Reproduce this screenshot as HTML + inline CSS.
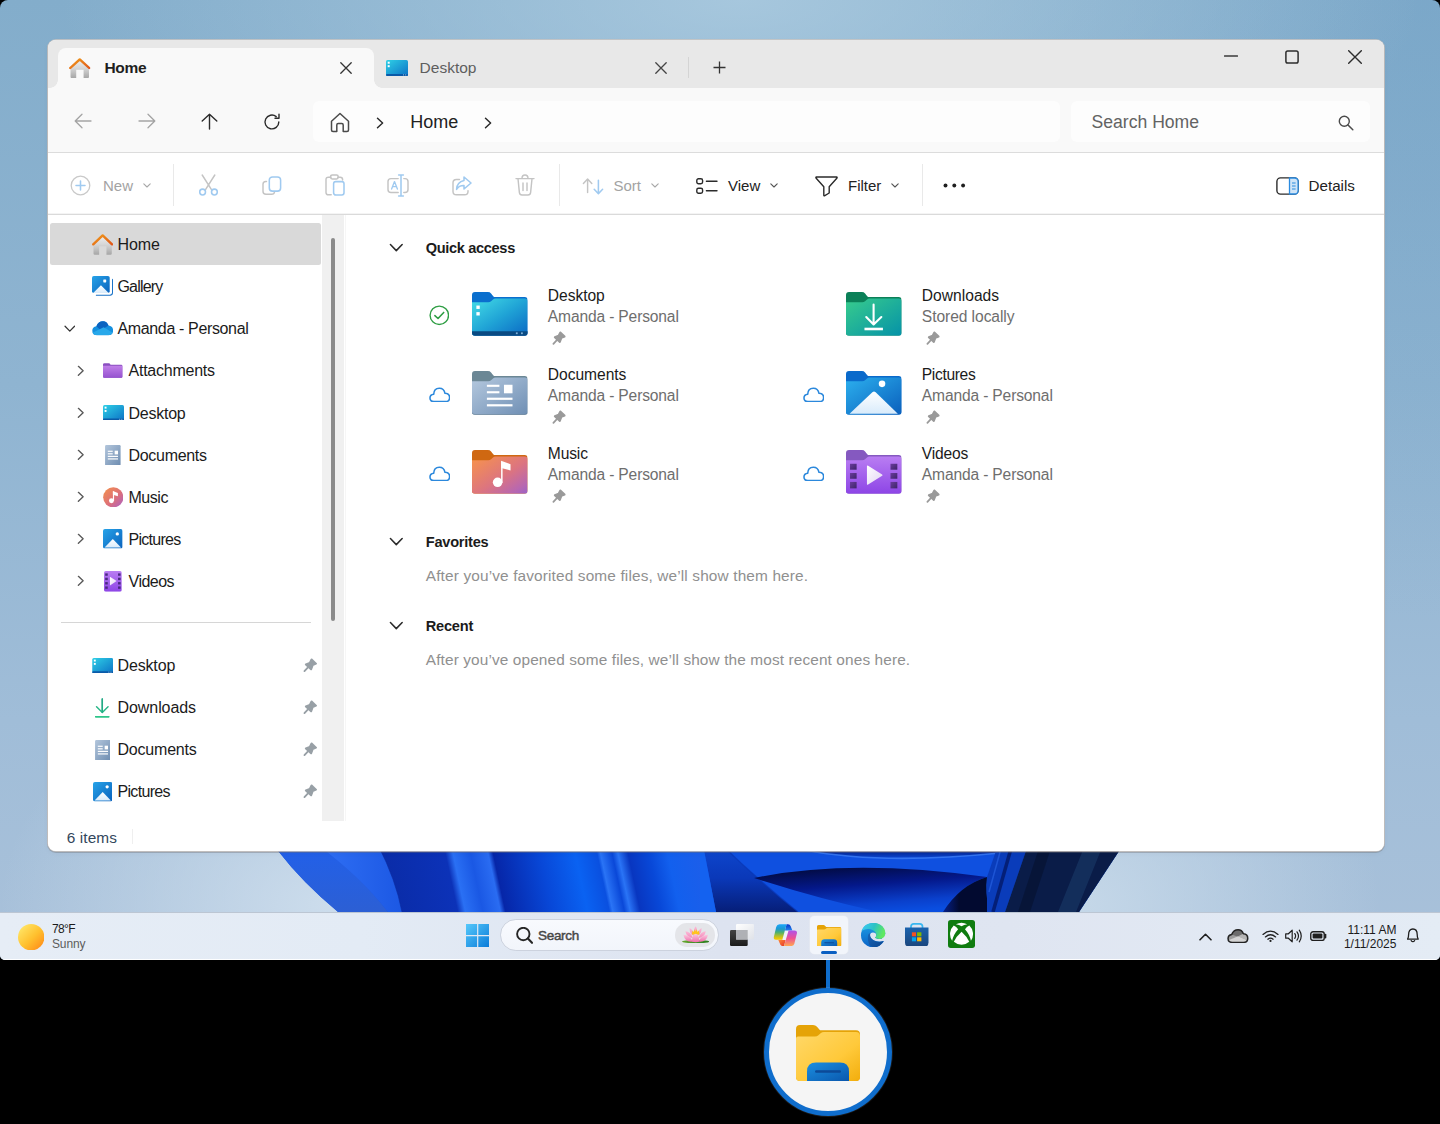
<!DOCTYPE html>
<html><head><meta charset="utf-8">
<style>
*{box-sizing:border-box;margin:0;padding:0}
html,body{width:1440px;height:1124px;background:#000;overflow:hidden}
body{font-family:"Liberation Sans",sans-serif;position:relative;color:#1b1b1b}
.abs{position:absolute}
#screen{position:absolute;left:0;top:0;width:1440px;height:960px;border-radius:8px 8px 5px 5px;overflow:hidden;
 background:
 radial-gradient(ellipse 680px 250px at 740px 0px,rgba(176,206,226,.78),rgba(176,206,226,0) 100%),
 radial-gradient(ellipse 330px 230px at 330px 905px,rgba(206,222,237,.95),rgba(206,222,237,0) 100%),
 radial-gradient(ellipse 300px 230px at 1080px 905px,rgba(200,218,234,.9),rgba(200,218,234,0) 100%),
 radial-gradient(ellipse 520px 620px at 1440px 0px,rgba(112,160,198,.42),rgba(112,160,198,0) 100%),
 linear-gradient(180deg,#83adcb 0%,#8fb4d1 40%,#a0bdd8 75%,#a9c1da 100%);}
#win{position:absolute;left:48px;top:40px;width:1335.6px;height:811px;border-radius:8px;background:#fff;overflow:hidden;
 box-shadow:0 0 0 1px rgba(205,198,192,.75),0 1px 0 1px rgba(110,110,115,.38),0 2px 6px rgba(0,0,0,.04)}
#tabbar{position:absolute;left:0;top:0;width:100%;height:48px;background:#e8e8e8}
#tab1{position:absolute;left:10px;top:8px;width:316px;height:40px;background:#f9f9f9;border-radius:8px 8px 0 0}
#tab1:before,#tab1:after{content:"";position:absolute;bottom:0;width:8px;height:8px}
#tab1:before{left:-8px;background:radial-gradient(circle at 0 0,rgba(0,0,0,0) 7.5px,#f9f9f9 8px)}
#tab1:after{right:-8px;background:radial-gradient(circle at 100% 0,rgba(0,0,0,0) 7.5px,#f9f9f9 8px)}
#navbar{position:absolute;left:0;top:48px;width:100%;height:65px;background:#f9f9f9;border-bottom:1px solid #dcdcdc}
.box{position:absolute;top:13px;height:41px;background:#fdfdfd;border-radius:6px}
#cmdbar{position:absolute;left:0;top:113px;width:100%;height:62px;background:#fff;border-bottom:1px solid #dadada;box-shadow:0 -1px 0 #f4f4f4 inset}
.vsep{position:absolute;width:1px;background:#e9e9e9;top:11px;height:42px}
.t{position:absolute;white-space:nowrap;line-height:1}
#side{position:absolute;left:0;top:175px;width:274px;height:607px;background:#fff}
#track{position:absolute;left:274px;top:175px;width:22px;height:607px;background:#f0f0f0}
#thumb{position:absolute;left:282.800px;top:198px;width:4.200px;height:383px;background:#8b8b8b;border-radius:2px}
#cline{position:absolute;left:297px;top:175px;width:1px;height:607px;background:#f6f6f6}
#status{position:absolute;left:0;top:781.3px;width:100%;height:30px;background:#fff}
#taskbar{position:absolute;left:0;top:912px;width:1440px;height:48px;background:linear-gradient(90deg,#e6edf6 0%,#e3ebf5 25%,#dde3f0 50%,#dfe5f1 70%,#e4ecf5 100%);box-shadow:inset 0 1px 0 #bcc6d3,inset 0 -1px 0 rgba(255,255,255,.92)}
</style></head>
<body>
<svg width="0" height="0" style="position:absolute">
<defs>
<linearGradient id="gHouse" x1="0" y1="0" x2="0" y2="1"><stop offset="0" stop-color="#eeeeee"/><stop offset=".45" stop-color="#d6d6d6"/><stop offset="1" stop-color="#a6a6a6"/></linearGradient>
<linearGradient id="gRoof" x1="0" y1="0" x2="1" y2="1"><stop offset="0" stop-color="#f09a1a"/><stop offset="1" stop-color="#e0581a"/></linearGradient>
<linearGradient id="gDesk" x1="0" y1="0" x2="1" y2="1"><stop offset="0" stop-color="#2fd0e6"/><stop offset="1" stop-color="#0c72c6"/></linearGradient>
<symbol id="iHome" viewBox="0 0 21.3 21" preserveAspectRatio="none">
 <path d="M1.5 10.5L10.65 2L19.8 10.500V19.400Q19.800 20.800 18.400 20.800H14.450V12.150H7.150V20.800H2.900Q1.500 20.800 1.500 19.400Z" fill="url(#gHouse)"/>
 <path d="M1.250 10.300L10.650 1.450L20.050 10.300" fill="none" stroke="url(#gRoof)" stroke-width="2.450" stroke-linecap="round" stroke-linejoin="round"/>
</symbol>
<symbol id="iDeskS" viewBox="0 0 22 16">
 <rect x="0" y="0" width="22" height="16" rx="1.6" fill="url(#gDesk)"/>
 <rect x="0" y="14" width="22" height="2" rx="1" fill="#0a5aa8"/>
 <rect x="1.700" y="1.700" width="2" height="2" fill="#fff"/><rect x="1.700" y="5.200" width="2" height="2" fill="#fff"/><rect x="17" y="14.400" width="1" height="1" fill="#9cc4e4"/><rect x="19.200" y="14.400" width="1" height="1" fill="#9cc4e4"/>
</symbol>
<symbol id="iX" viewBox="0 0 12 12"><path d="M0.8 0.8 L11.2 11.2 M11.2 0.8 L0.8 11.2" stroke="currentColor" stroke-width="1.3" stroke-linecap="round" fill="none"/></symbol>
<symbol id="iChevR" viewBox="0 0 8 12"><path d="M1.5 1.2 L6.6 6 L1.5 10.8" fill="none" stroke="currentColor" stroke-width="1.5" stroke-linecap="round" stroke-linejoin="round"/></symbol>
<symbol id="iChevD" viewBox="0 0 12 8"><path d="M1 1.3 L6 6.5 L11 1.3" fill="none" stroke="currentColor" stroke-width="1.3" stroke-linecap="round" stroke-linejoin="round"/></symbol>
<symbol id="iChevDs" viewBox="0 0 8 5"><path d="M0.8 0.8 L4 4 L7.2 0.8" fill="none" stroke="currentColor" stroke-width="1.1" stroke-linecap="round" stroke-linejoin="round"/></symbol>
<!--M0--><linearGradient id="gPic" x1="0" y1="0" x2="1" y2="1"><stop offset="0" stop-color="#27a3e8"/><stop offset="1" stop-color="#0a62bd"/></linearGradient>
<linearGradient id="gMtn" x1="0" y1="0" x2="0" y2="1"><stop offset="0" stop-color="#ffffff"/><stop offset="1" stop-color="#d8ebfb"/></linearGradient>
<linearGradient id="gPurp" x1="0" y1="0" x2="0" y2="1"><stop offset="0" stop-color="#c07fe8"/><stop offset="1" stop-color="#9552cf"/></linearGradient>
<linearGradient id="gDoc" x1="0" y1="0" x2="1" y2="1"><stop offset="0" stop-color="#b3c6dc"/><stop offset="1" stop-color="#6d8cb0"/></linearGradient>
<linearGradient id="gMus" x1="0" y1="0" x2="1" y2="1"><stop offset="0" stop-color="#f4934a"/><stop offset=".55" stop-color="#de7078"/><stop offset="1" stop-color="#a860c8"/></linearGradient>
<linearGradient id="gVid" x1="0" y1="0" x2="0" y2="1"><stop offset="0" stop-color="#b97df2"/><stop offset="1" stop-color="#8d45e6"/></linearGradient>
<linearGradient id="gDl" x1="0" y1="0" x2="1" y2="1"><stop offset="0" stop-color="#38cc8c"/><stop offset="1" stop-color="#0592a8"/></linearGradient>
<linearGradient id="gDlS" x1="0" y1="0" x2="0" y2="1"><stop offset="0" stop-color="#22a884"/><stop offset="1" stop-color="#2fc58a"/></linearGradient>
<linearGradient id="gPerf" x1="0" y1="0" x2="1" y2="1"><stop offset="0" stop-color="#6a3c9c"/><stop offset="1" stop-color="#3d2468"/></linearGradient>
<linearGradient id="gPlay" x1="0" y1="0" x2="1" y2="1"><stop offset="0" stop-color="#ffffff"/><stop offset="1" stop-color="#e2d4f4"/></linearGradient>
<linearGradient id="gFold" x1="0" y1="0" x2="0" y2="1"><stop offset="0" stop-color="#ffd55e"/><stop offset="1" stop-color="#f7b715"/></linearGradient>
<linearGradient id="gFoldF" x1="0" y1="0" x2="1" y2="1"><stop offset="0" stop-color="#ffd869"/><stop offset=".6" stop-color="#ffc93a"/><stop offset="1" stop-color="#f2ad0c"/></linearGradient>
<linearGradient id="gFoldB" x1="0" y1="0" x2="1" y2="1"><stop offset="0" stop-color="#1b8fe0"/><stop offset="1" stop-color="#0a57ad"/></linearGradient>
<symbol id="iGallery" viewBox="0 0 22 22">
 <path d="M4 19.200V20.200H19Q21.600 20.200 21.600 17.600V4Q21.600 3 20.600 2.800V17Q20.600 19.200 18.400 19.200Z" fill="#1a73c8"/>
 <rect x="0" y="0" width="18.200" height="17.600" rx="1.800" fill="url(#gPic)"/>
 <path d="M1.200 17.600L9.200 9.600L17.200 17.600Z" fill="url(#gMtn)"/>
 <rect x="11.600" y="3.600" width="3" height="3" rx=".6" fill="#fff"/>
</symbol>
<symbol id="iOneD" viewBox="0 0 22 15">
 <path d="M5.200 14.600Q0.300 14.600 0.300 10Q0.300 6.200 4.500 5.400Q6.500 0.300 11.300 0.300Q15.300 0.300 17 4.700Q21.700 5.200 21.700 9.800Q21.700 14.600 17 14.600Z" fill="#1490df"/>
 <path d="M4.500 5.400Q6.500 0.300 11.300 0.300Q15.300 0.300 17 4.700L9 9.500Z" fill="#0a63c0"/>
 <path d="M0.600 12L12 6.400L21.300 12.200Q20.200 14.600 17 14.600H5.200Q1.600 14.600 0.600 12Z" fill="#28a8ea"/>
</symbol>
<symbol id="iFoldP" viewBox="0 0 20 15">
 <path d="M0 1.500Q0 0 1.500 0H6Q7 0 7.400 1L7.700 1.700H18.500Q20 1.700 20 3.200V13.500Q20 15 18.500 15H1.500Q0 15 0 13.500Z" fill="#8b4fc0"/>
 <path d="M0 2.600H20V13.600Q20 15 18.600 15H1.400Q0 15 0 13.600Z" fill="url(#gPurp)"/>
</symbol>
<symbol id="iDocS" viewBox="0 0 16 21">
 <rect x="0" y="0" width="16" height="21" rx="1.400" fill="url(#gDoc)"/>
 <rect x="2.800" y="5.800" width="5" height="1.200" fill="#fff"/><rect x="2.800" y="8.400" width="5" height="1.200" fill="#fff"/>
 <rect x="2.800" y="11" width="10.400" height="1.200" fill="#fff"/><rect x="2.800" y="13.600" width="10.400" height="1.200" fill="#fff"/>
 <rect x="9.800" y="5.800" width="3.400" height="3.800" fill="#fff"/>
</symbol>
<symbol id="iMusS" viewBox="0 0 21 21">
 <circle cx="10.500" cy="10.500" r="10.300" fill="url(#gMus)"/>
 <circle cx="8.600" cy="14" r="2.500" fill="#fff"/><rect x="10.100" y="4.600" width="1.200" height="9.600" fill="#fff"/>
 <path d="M10.100 4.200L15.200 6V9.400L10.100 7.800Z" fill="#fff"/>
</symbol>
<symbol id="iPicS" viewBox="0 0 20 20">
 <rect x="0" y="0" width="20" height="20" rx="2" fill="url(#gPic)"/>
 <path d="M1.600 19L10 10.200L18.400 19Z" fill="url(#gMtn)"/>
 <circle cx="14.600" cy="5" r="1.700" fill="#fff"/>
</symbol>
<symbol id="iVidS" viewBox="0 0 18 21">
 <rect x="0" y="0" width="18" height="21" rx="1.800" fill="url(#gVid)"/>
 <g fill="#4a2a80"><rect x="1.200" y="2.400" width="2.600" height="2.400"/><rect x="1.200" y="6.800" width="2.600" height="2.400"/><rect x="1.200" y="11.200" width="2.600" height="2.400"/><rect x="1.200" y="15.600" width="2.600" height="2.400"/>
 <rect x="14.200" y="2.400" width="2.600" height="2.400"/><rect x="14.200" y="6.800" width="2.600" height="2.400"/><rect x="14.200" y="11.200" width="2.600" height="2.400"/><rect x="14.200" y="15.600" width="2.600" height="2.400"/></g>
 <path d="M6 5.800L12.800 10.200L6 14.600Z" fill="url(#gPlay)"/>
</symbol>
<symbol id="iDlS" viewBox="0 0 15 20">
 <path d="M7.500 0.800V14.500M1.600 8.800L7.500 14.700L13.400 8.800M0.700 18.900H14.300" fill="none" stroke="url(#gDlS)" stroke-width="1.500" stroke-linecap="round" stroke-linejoin="round"/>
 <path d="M0.700 18.900H14.300" stroke="#2fc58a" stroke-width="1.500" stroke-linecap="round"/>
 <path d="M7.500 0.800V14.500" stroke="#23aa86" stroke-width="1.500" stroke-linecap="round"/>
</symbol>
<symbol id="iPin" viewBox="0 0 15 15">
 <path d="M8.800 1.500L13.300 5.800L9.900 7.300L8.300 11.600L3 6.600L7 5Z" fill="currentColor" stroke="currentColor" stroke-width="2.100" stroke-linejoin="round" stroke-linecap="round"/>
 <path d="M5.600 9.200L1.500 13.500" stroke="currentColor" stroke-width="1.900" stroke-linecap="round"/>
</symbol>
<symbol id="iCloudO" viewBox="0 0 22 16">
 <path d="M5 14.800Q1 14.800 1 11.200Q1 7.800 4.800 7.400Q5 1.200 10.500 1.200Q15.300 1.200 16.300 6.400Q21 6.600 21 10.800Q21 14.800 17 14.800Z" fill="none" stroke="#2b88dc" stroke-width="1.600" stroke-linejoin="round"/>
</symbol>
<symbol id="iCheckO" viewBox="0 0 21 21">
 <circle cx="10.500" cy="10.500" r="9.400" fill="none" stroke="#2f9e44" stroke-width="1.400"/>
 <path d="M6 10.800L9.200 13.800L15 7.600" fill="none" stroke="#2f9e44" stroke-width="1.600" stroke-linecap="round" stroke-linejoin="round"/>
</symbol>
<!-- large folders 56x44 -->
<symbol id="fTab" viewBox="0 0 56 44"><path d="M0 3Q0 0 3 0H16Q18 0 19.200 1.400L21.600 4.400Q22.200 5.100 23.200 5.100H53Q56 5.100 56 8.100V41Q56 44 53 44H3Q0 44 0 41Z" fill="currentColor"/></symbol>
<symbol id="fBody" viewBox="0 0 56 44"><path d="M0 10.200H16.400Q18 10.200 19.200 9.200L21.200 7.400Q22.200 6.600 23.600 6.600H53Q56 6.600 56 9.600V41Q56 44 53 44H3Q0 44 0 41Z"/></symbol>
<linearGradient id="gDeskL" x1="0" y1="0" x2="1" y2="1"><stop offset="0" stop-color="#44dde6"/><stop offset=".5" stop-color="#20a4d6"/><stop offset="1" stop-color="#0a68c4"/></linearGradient>
<linearGradient id="gDocL" x1="0" y1="0" x2="1" y2="1"><stop offset="0" stop-color="#b4c8de"/><stop offset="1" stop-color="#6f8fb4"/></linearGradient>
<linearGradient id="gMusL" x1="0" y1="0" x2="1" y2="1"><stop offset="0" stop-color="#f8944a"/><stop offset=".55" stop-color="#dc7480"/><stop offset=".85" stop-color="#b867b0"/><stop offset="1" stop-color="#9a62c8"/></linearGradient>
<linearGradient id="gPicL" x1="0" y1="0" x2="1" y2="1"><stop offset="0" stop-color="#2cb0ee"/><stop offset="1" stop-color="#0a5fbc"/></linearGradient>
<symbol id="fExplorer" viewBox="0 0 64 56">
 <path d="M0 4Q0 0 4 0H17Q19.500 0 21 1.800L24 5.200H60Q64 5.200 64 9.200V52Q64 56 60 56H4Q0 56 0 52Z" fill="#e5a307"/>
 <path d="M0 13.500Q0 11.500 2 11.500H19Q21 11.500 22.400 10.200L24.600 8.200Q26 7 28 7H60Q64 7 64 11V52Q64 56 60 56H4Q0 56 0 52Z" fill="url(#gFoldF)"/>
 <path d="M11 56V46.500Q11 37.500 20 37.500H44Q53 37.500 53 46.500V56Z" fill="url(#gFoldB)"/>
 <rect x="19" y="45.200" width="26" height="2.600" rx="1.300" fill="#0c4a98"/>
</symbol>
<!--M1-->
</defs></svg>

<div id="screen">
<svg class="abs" style="left:0;top:845px" width="1440" height="68" viewBox="0 -7 1440 68">
<defs>
<linearGradient id="gBl" gradientUnits="userSpaceOnUse" x1="280" y1="0" x2="1118" y2="0" gradientTransform="skewX(12)">
<stop offset="0" stop-color="#2058e2"/><stop offset=".06" stop-color="#2a66ee"/><stop offset=".112" stop-color="#1c50d8"/><stop offset=".122" stop-color="#0a2ca8"/><stop offset=".197" stop-color="#0c32b8"/><stop offset=".206" stop-color="#2a70f4"/><stop offset=".227" stop-color="#1a58e4"/><stop offset=".248" stop-color="#2a6cf2"/><stop offset=".254" stop-color="#0626a8"/><stop offset=".31" stop-color="#0848d8"/><stop offset=".352" stop-color="#0a62f2"/><stop offset=".378" stop-color="#0a50e0"/><stop offset=".382" stop-color="#2a74f6"/><stop offset=".396" stop-color="#0a48d8"/><stop offset=".403" stop-color="#2a74f6"/><stop offset=".415" stop-color="#0836c0"/><stop offset=".44" stop-color="#0848d8"/><stop offset=".462" stop-color="#1260ee"/><stop offset=".5" stop-color="#1c5eea"/><stop offset=".523" stop-color="#0a3cc8"/><stop offset=".543" stop-color="#0a58ec"/><stop offset=".573" stop-color="#0a4ce0"/><stop offset=".68" stop-color="#0840d0"/><stop offset=".81" stop-color="#062ca8"/><stop offset=".86" stop-color="#04206c"/><stop offset=".93" stop-color="#0a2458"/><stop offset="1" stop-color="#0c2048"/></linearGradient>
<linearGradient id="gBl2" x1="0" y1="0" x2="1" y2="0"><stop offset="0" stop-color="#031a80"/><stop offset=".6" stop-color="#020c48"/><stop offset="1" stop-color="#03103c"/></linearGradient>
<linearGradient id="gBl3" x1="0" y1="0" x2="1" y2="0"><stop offset="0" stop-color="#0a50e8"/><stop offset=".5" stop-color="#0a48dc"/><stop offset="1" stop-color="#062890"/></linearGradient>
<linearGradient id="gBl4" x1="0" y1="0" x2="0" y2="1"><stop offset="0" stop-color="#2a72f4"/><stop offset="1" stop-color="#0a4ce0"/></linearGradient>
<linearGradient id="gA" x1="0" y1="0" x2="0" y2="1"><stop offset="0" stop-color="#0e48d0"/><stop offset=".5" stop-color="#0a38b8"/><stop offset="1" stop-color="#061e78"/></linearGradient>
<linearGradient id="gC" x1="0.200" y1="0" x2="0.600" y2="1"><stop offset="0" stop-color="#020a3c"/><stop offset=".42" stop-color="#04188a"/><stop offset=".8" stop-color="#0a40cc"/><stop offset="1" stop-color="#0a4ee0"/></linearGradient>
<linearGradient id="gD" x1="0" y1="0" x2="1" y2="0"><stop offset="0" stop-color="#06208a"/><stop offset=".35" stop-color="#020a30"/><stop offset="1" stop-color="#020a30"/></linearGradient>
<linearGradient id="gL1" x1="0" y1="0" x2="0" y2="1"><stop offset="0" stop-color="#2160ea"/><stop offset="1" stop-color="#2c5fd4"/></linearGradient>
<linearGradient id="gL2" x1="0" y1="0" x2="1" y2="0"><stop offset="0" stop-color="#3070f4"/><stop offset="1" stop-color="#1c58e4"/></linearGradient>
<linearGradient id="gTopD" x1="0" y1="0" x2="0" y2="1"><stop offset="0" stop-color="#04145a"/><stop offset=".55" stop-color="#062a9c"/><stop offset="1" stop-color="#0c48d4"/></linearGradient>
</defs>
<path d="M273 -7H1123L1079 60H338Q302 30 279 0L273 -7Z" fill="url(#gBl)"/>
<path d="M273 -7L279 0Q302 30 338 60H388Q360 24 318 -7Z" fill="url(#gL1)"/>
<path d="M318 -7Q360 24 388 60H402Q396 28 378 -7Z" fill="url(#gL2)"/>
<path d="M378 -7Q396 28 402 60" stroke="#0a2ca0" stroke-width="1" fill="none" opacity=".6"/>
<!-- right half swooshes -->
<path d="M700 -7H1123L1079 60H700Z" fill="#0f50e0"/>
<path d="M703 -7H722Q758 28 798 60H716Z" fill="url(#gA)"/><path d="M700 -7H703L716 60H700Z" fill="#1462f0"/>
<path d="M722 -7Q758 28 798 60" stroke="#0a36b4" stroke-width="1.200" fill="none" opacity=".7"/>
<path d="M805 -2Q880 13 1000 1V-7H805Z" fill="url(#gTopD)"/>
<path d="M805 -2Q880 13 1000 1" stroke="#3f7ef6" stroke-width="1.600" fill="none" opacity=".8"/>
<path d="M754 26Q850 6 987 25Q960 33 945 60H879Q819 47 754 26Z" fill="url(#gC)"/>
<path d="M987 25Q960 33 943 60H989Q985 40 987 25Z" fill="url(#gD)"/>
<path d="M987 25L998 -7H1028L1005 60H987Z" fill="#0a3cba"/>
<path d="M1012 -7L993 60" stroke="#041a6c" stroke-width="3.500" opacity=".85"/>
<path d="M1002 -7L989 40" stroke="#2a66e8" stroke-width="1.500" opacity=".6"/>
<path d="M1028 -7H1123L1079 60H1005Z" fill="#0a1c48"/>
<path d="M1085 -7H1103L1076 60H1058Z" fill="#15315f" opacity=".85"/>
<path d="M1040 -7L1018 60H1030L1052 -7Z" fill="#061434" opacity=".8"/>
</svg>

<div id="win">
 <div id="tabbar"><div id="tab1"></div>
<svg class="abs" style="left:21.200px;top:17.800px" width="21.500" height="20.400"><use href="#iHome"/></svg>
<div class="t" style="left:56.5px;top:19.8px;font-size:15.5px;font-weight:bold;color:#1f1f1f;letter-spacing:-.35px">Home</div>
<svg class="abs" style="left:291.5px;top:21.5px;color:#333" width="12" height="12"><use href="#iX"/></svg>
<svg class="abs" style="left:337.5px;top:20px" width="22" height="16"><use href="#iDeskS"/></svg>
<div class="t" style="left:371.6px;top:19.8px;font-size:15.5px;color:#5e5e5e">Desktop</div>
<svg class="abs" style="left:607px;top:21.5px;color:#444" width="12" height="12"><use href="#iX"/></svg>
<div class="abs" style="left:640px;top:17px;width:1px;height:21px;background:#d4d4d4"></div>
<svg class="abs" style="left:665px;top:21px;color:#333" width="13" height="13" viewBox="0 0 13 13"><path d="M6.5 0.5V12.5M0.5 6.5H12.5" stroke="currentColor" stroke-width="1.3" fill="none"/></svg>
<svg class="abs" style="left:1176px;top:15px;color:#3a3a3a" width="14" height="2" viewBox="0 0 14 2"><path d="M0.5 1H13.5" stroke="currentColor" stroke-width="1.3" stroke-linecap="round"/></svg>
<svg class="abs" style="left:1237px;top:9.5px;color:#2c2c2c" width="14" height="14" viewBox="0 0 14 14"><rect x="0.9" y="0.9" width="12.2" height="12.2" rx="1.8" fill="none" stroke="currentColor" stroke-width="1.5"/></svg>
<svg class="abs" style="left:1299.5px;top:9.5px;color:#2c2c2c" width="14" height="14" viewBox="0 0 14 14"><path d="M0.7 0.7L13.3 13.3M13.3 0.7L0.7 13.3" stroke="currentColor" stroke-width="1.4" stroke-linecap="round"/></svg>

 </div>
 <div id="navbar">
  <div class="box" style="left:265px;width:747px"></div>
  <div class="box" style="left:1023px;width:299.2px"></div>
<svg class="abs" style="left:26px;top:24.8px;color:#a5a5a5" width="18" height="16" viewBox="0 0 18 16"><path d="M8 1.2L1.2 8L8 14.8M1.5 8H17" fill="none" stroke="currentColor" stroke-width="1.3" stroke-linecap="round" stroke-linejoin="round"/></svg>
<svg class="abs" style="left:89.5px;top:24.8px;color:#a5a5a5" width="18" height="16" viewBox="0 0 18 16"><path d="M10 1.2L16.8 8L10 14.8M16.5 8H1" fill="none" stroke="currentColor" stroke-width="1.3" stroke-linecap="round" stroke-linejoin="round"/></svg>
<svg class="abs" style="left:152.5px;top:24.5px;color:#2b2b2b" width="17" height="17" viewBox="0 0 17 17"><path d="M1.2 8L8.5 1.2L15.8 8M8.5 1.5V16" fill="none" stroke="currentColor" stroke-width="1.4" stroke-linecap="round" stroke-linejoin="round"/></svg>
<svg class="abs" style="left:215px;top:24.8px;color:#2b2b2b" width="18" height="18" viewBox="0 0 18 18"><path d="M15.8 9A6.9 6.9 0 1 1 13.2 3.6M16 1.2V5.2H12" fill="none" stroke="currentColor" stroke-width="1.4" stroke-linecap="round" stroke-linejoin="round"/></svg>
<svg class="abs" style="left:282px;top:23.5px;color:#4a4a4a" width="20" height="21" viewBox="0 0 20 21"><path d="M1.5 9.2L10 1.5L18.5 9.2V18Q18.5 19.5 17 19.5H13.2V13Q13.2 11.6 11.8 11.6H8.2Q6.8 11.6 6.8 13V19.5H3Q1.5 19.5 1.5 18Z" fill="none" stroke="currentColor" stroke-width="1.5" stroke-linejoin="round"/></svg>
<svg class="abs" style="left:327.5px;top:28.5px;color:#2b2b2b" width="8" height="12"><use href="#iChevR"/></svg>
<div class="t" style="left:362.300px;top:24.800px;font-size:18px;color:#222;letter-spacing:-.05px">Home</div>
<svg class="abs" style="left:436px;top:28.5px;color:#2b2b2b" width="8" height="12"><use href="#iChevR"/></svg>
<div class="t" style="left:1043.5px;top:26.3px;font-size:17.6px;color:#636363">Search Home</div>
<svg class="abs" style="left:1290px;top:27px;color:#4a4a4a" width="16" height="16" viewBox="0 0 16 16"><circle cx="6.3" cy="6.3" r="5" fill="none" stroke="currentColor" stroke-width="1.4"/><path d="M10 10L14.8 14.8" stroke="currentColor" stroke-width="1.5" stroke-linecap="round"/></svg>

 </div>
 <div id="cmdbar">
  <div class="vsep" style="left:125px"></div><div class="vsep" style="left:511px"></div><div class="vsep" style="left:874px"></div>
<svg class="abs" style="left:22px;top:22px" width="21" height="21" viewBox="0 0 21 21"><circle cx="10.5" cy="10.5" r="9.3" fill="none" stroke="#c9c9c9" stroke-width="1.3"/><path d="M10.5 6V15M6 10.5H15" stroke="#a0caf0" stroke-width="1.55" stroke-linecap="round"/></svg>
<div class="t" style="left:55px;top:25px;font-size:15px;color:#a3a3a3">New</div>
<svg class="abs" style="left:95px;top:30px;color:#a8a8a8" width="8" height="5"><use href="#iChevDs"/></svg>
<!-- cut -->
<svg class="abs" style="left:150px;top:21px" width="21" height="22" viewBox="0 0 21 22"><path d="M4.2 1L13.8 16.2M16.8 1L7.2 16.2" stroke="#c4c4c4" stroke-width="1.45" stroke-linecap="round" fill="none"/><circle cx="4.6" cy="18" r="2.9" fill="none" stroke="#a0caf0" stroke-width="1.55"/><circle cx="16.4" cy="18" r="2.9" fill="none" stroke="#a0caf0" stroke-width="1.55"/></svg>
<!-- copy -->
<svg class="abs" style="left:214px;top:23px" width="20" height="20" viewBox="0 0 20 20"><path d="M4.5 5.5H3.8Q1 5.5 1 8.3V15.2Q1 18.2 4 18.2H9.5Q12.3 18.2 12.5 16" fill="none" stroke="#c4c4c4" stroke-width="1.45" stroke-linecap="round"/><rect x="7.300" y="0.900" width="11.300" height="14.200" rx="3.200" fill="none" stroke="#a0caf0" stroke-width="1.55"/></svg>
<!-- paste -->
<svg class="abs" style="left:277px;top:21px" width="20" height="22" viewBox="0 0 20 22"><path d="M6 3.2H3.4Q1 3.2 1 5.6V18.4Q1 20.8 3.4 20.8H6.2" fill="none" stroke="#c4c4c4" stroke-width="1.45" stroke-linecap="round"/><path d="M12.8 3.2H15.2Q17.6 3.2 17.6 5.6V6" fill="none" stroke="#c4c4c4" stroke-width="1.45" stroke-linecap="round"/><rect x="5.6" y="0.9" width="7.6" height="4" rx="1.6" fill="none" stroke="#c4c4c4" stroke-width="1.45"/><rect x="8.6" y="7.6" width="10.4" height="13.4" rx="2.2" fill="none" stroke="#a0caf0" stroke-width="1.55"/></svg>
<!-- rename -->
<svg class="abs" style="left:339px;top:21px" width="22" height="23" viewBox="0 0 22 23"><path d="M11.2 4.6H4Q1 4.6 1 7.6V15.4Q1 18.4 4 18.4H11.2M16.8 4.6H18Q21 4.6 21 7.6V15.4Q21 18.4 18 18.4H16.8" fill="none" stroke="#c4c4c4" stroke-width="1.45" stroke-linecap="round"/><path d="M11.6 1H16.4M14 1V22M11.6 22H16.4" fill="none" stroke="#a0caf0" stroke-width="1.55" stroke-linecap="round"/><path d="M4.6 15L7.5 7.6L10.4 15M5.6 12.6H9.4" fill="none" stroke="#a0caf0" stroke-width="1.35" stroke-linecap="round" stroke-linejoin="round"/></svg>
<!-- share -->
<svg class="abs" style="left:404px;top:22.5px" width="20" height="20" viewBox="0 0 20 20"><path d="M7.5 3.4H4.4Q1 3.4 1 6.8V15.4Q1 18.8 4.4 18.8H12.6Q16 18.8 16 15.4V14.6" fill="none" stroke="#c4c4c4" stroke-width="1.45" stroke-linecap="round"/><path d="M12 1L19 7L12 13V9.6Q7.2 9.4 4.6 13.4Q5 6 12 4.6Z" fill="none" stroke="#a0caf0" stroke-width="1.55" stroke-linejoin="round"/></svg>
<!-- delete -->
<svg class="abs" style="left:466.5px;top:21px" width="20" height="22" viewBox="0 0 20 22"><path d="M1 4.6H19M7 4.4Q7 1 10 1Q13 1 13 4.4M3 4.8L4.4 18.6Q4.7 21 7 21H13Q15.300 21 15.6 18.6L17 4.800M8 9V16.500M12 9V16.500" fill="none" stroke="#c4c4c4" stroke-width="1.45" stroke-linecap="round" stroke-linejoin="round"/></svg>
<!-- sort -->
<svg class="abs" style="left:533.5px;top:23.5px" width="22" height="18" viewBox="0 0 22 18"><path d="M1.400 6.400L5.600 2L9.800 6.400M5.600 2.300V15.500" fill="none" stroke="#c4c4c4" stroke-width="1.450" stroke-linecap="round" stroke-linejoin="round"/><path d="M12.200 12.300L16.400 16.700L20.600 12.300M16.400 16.400V3.200" fill="none" stroke="#a0caf0" stroke-width="1.550" stroke-linecap="round" stroke-linejoin="round"/></svg>
<div class="t" style="left:565.5px;top:25px;font-size:15px;color:#a3a3a3">Sort</div>
<svg class="abs" style="left:603px;top:30px;color:#a8a8a8" width="8" height="5"><use href="#iChevDs"/></svg>
<!-- view -->
<svg class="abs" style="left:648px;top:24.500px" width="22" height="17" viewBox="0 0 22 17"><rect x="0.800" y="0.800" width="5.800" height="5" rx="1.700" fill="none" stroke="#2b2b2b" stroke-width="1.400"/><rect x="0.800" y="10.200" width="5.800" height="5" rx="1.700" fill="none" stroke="#2b2b2b" stroke-width="1.400"/><path d="M10.400 3.300H21M10.400 12.700H21" stroke="#2b2b2b" stroke-width="1.400" stroke-linecap="round"/></svg>
<div class="t" style="left:680px;top:25px;font-size:15px;color:#222">View</div>
<svg class="abs" style="left:721.500px;top:30px;color:#555" width="8" height="5"><use href="#iChevDs"/></svg>
<!-- filter -->
<svg class="abs" style="left:767px;top:22.500px" width="23" height="21" viewBox="0 0 23 21"><path d="M1.500 1H21.500Q22.600 1.200 21.800 2.300L14.200 10.800V17L9.400 19.800Q8.800 20 8.800 19.300V10.800L1.200 2.300Q0.400 1.200 1.500 1Z" fill="none" stroke="#2b2b2b" stroke-width="1.400" stroke-linejoin="round"/></svg>
<div class="t" style="left:800px;top:25px;font-size:15px;color:#222">Filter</div>
<svg class="abs" style="left:843px;top:30px;color:#555" width="8" height="5"><use href="#iChevDs"/></svg>
<svg class="abs" style="left:895px;top:30.400px" width="23" height="5" viewBox="0 0 23 5"><circle cx="2.500" cy="2.500" r="1.950" fill="#1f1f1f"/><circle cx="11.300" cy="2.500" r="1.950" fill="#1f1f1f"/><circle cx="20.100" cy="2.500" r="1.950" fill="#1f1f1f"/></svg>
<!-- details -->
<svg class="abs" style="left:1228px;top:24px" width="23" height="18" viewBox="0 0 23 18"><rect x="0.900" y="0.900" width="21.200" height="16.200" rx="3.600" fill="none" stroke="#2b2b2b" stroke-width="1.400"/><path d="M13.500 1V17H18.500Q22.100 17 22.100 13.500V4.500Q22.100 1 18.500 1Z" fill="#cfe4f7" stroke="#2b8be0" stroke-width="1.300"/><path d="M16 6H19.600M16 9H19.600M16 12H19.600" stroke="#2b8be0" stroke-width="1.100"/></svg>
<div class="t" style="left:1260.500px;top:25px;font-size:15.200px;color:#222">Details</div>

 </div>
 <div id="side">
  <div class="abs" style="left:2px;top:8px;width:271px;height:41.600px;background:#d9d9d9;border-radius:2.500px"></div>
  <div class="abs" style="left:13px;top:407px;width:250px;height:1px;background:#d6d6d6"></div>
<svg class="abs" style="left:43.80px;top:19.00px" width="21.3" height="21"><use href="#iHome"/></svg>
<div class="t" style="left:69.50px;top:22.30px;font-size:16px;color:#1b1b1b;letter-spacing:-0.060px;">Home</div>
<svg class="abs" style="left:43.80px;top:60.80px" width="21.4" height="21.4"><use href="#iGallery"/></svg>
<div class="t" style="left:69.50px;top:64.36px;font-size:16px;color:#1b1b1b;letter-spacing:-0.822px;">Gallery</div>
<svg class="abs" style="left:43.80px;top:106.20px" width="21.4" height="14.6"><use href="#iOneD"/></svg>
<div class="t" style="left:69.50px;top:106.42px;font-size:16px;color:#1b1b1b;letter-spacing:-0.357px;">Amanda - Personal</div>
<svg class="abs" style="left:15.50px;top:109.80px;color:#333" width="11.6" height="7.6"><use href="#iChevD"/></svg>
<svg class="abs" style="left:55.20px;top:147.50px" width="19.6" height="15"><use href="#iFoldP"/></svg>
<div class="t" style="left:80.50px;top:148.48px;font-size:16px;color:#1b1b1b;letter-spacing:-0.243px;">Attachments</div>
<svg class="abs" style="left:28.60px;top:149.68px;color:#5a5a5a" width="7.4" height="11.6"><use href="#iChevR"/></svg>
<svg class="abs" style="left:54.60px;top:190.00px" width="21" height="15.4"><use href="#iDeskS"/></svg>
<div class="t" style="left:80.50px;top:190.54px;font-size:16px;color:#1b1b1b;letter-spacing:-0.241px;">Desktop</div>
<svg class="abs" style="left:28.60px;top:191.74px;color:#5a5a5a" width="7.4" height="11.6"><use href="#iChevR"/></svg>
<svg class="abs" style="left:57.00px;top:229.60px" width="15.8" height="20.6"><use href="#iDocS"/></svg>
<div class="t" style="left:80.50px;top:232.60px;font-size:16px;color:#1b1b1b;letter-spacing:-0.303px;">Documents</div>
<svg class="abs" style="left:28.60px;top:233.80px;color:#5a5a5a" width="7.4" height="11.6"><use href="#iChevR"/></svg>
<svg class="abs" style="left:54.60px;top:271.60px" width="20.6" height="20.6"><use href="#iMusS"/></svg>
<div class="t" style="left:80.50px;top:274.66px;font-size:16px;color:#1b1b1b;letter-spacing:-0.470px;">Music</div>
<svg class="abs" style="left:28.60px;top:275.86px;color:#5a5a5a" width="7.4" height="11.6"><use href="#iChevR"/></svg>
<svg class="abs" style="left:55.20px;top:314.40px" width="19.6" height="19.6"><use href="#iPicS"/></svg>
<div class="t" style="left:80.50px;top:316.72px;font-size:16px;color:#1b1b1b;letter-spacing:-0.728px;">Pictures</div>
<svg class="abs" style="left:28.60px;top:317.92px;color:#5a5a5a" width="7.4" height="11.6"><use href="#iChevR"/></svg>
<svg class="abs" style="left:56.20px;top:355.80px" width="17.8" height="20.8"><use href="#iVidS"/></svg>
<div class="t" style="left:80.50px;top:358.78px;font-size:16px;color:#1b1b1b;letter-spacing:-0.507px;">Videos</div>
<svg class="abs" style="left:28.60px;top:359.98px;color:#5a5a5a" width="7.4" height="11.6"><use href="#iChevR"/></svg>
<svg class="abs" style="left:43.80px;top:442.80px" width="21.4" height="15.2"><use href="#iDeskS"/></svg>
<div class="t" style="left:69.50px;top:443.35px;font-size:16px;color:#1b1b1b;letter-spacing:-0.149px;">Desktop</div>
<svg class="abs" style="left:254.80px;top:443.00px;color:#98a0a6" width="14.6" height="14.6"><use href="#iPin"/></svg>
<svg class="abs" style="left:47.20px;top:483.20px" width="14.6" height="20"><use href="#iDlS"/></svg>
<div class="t" style="left:69.50px;top:485.35px;font-size:16px;color:#1b1b1b;letter-spacing:-0.070px;">Downloads</div>
<svg class="abs" style="left:254.80px;top:485.00px;color:#98a0a6" width="14.6" height="14.6"><use href="#iPin"/></svg>
<svg class="abs" style="left:46.60px;top:524.50px" width="15.8" height="20.6"><use href="#iDocS"/></svg>
<div class="t" style="left:69.50px;top:527.35px;font-size:16px;color:#1b1b1b;letter-spacing:-0.203px;">Documents</div>
<svg class="abs" style="left:254.80px;top:527.00px;color:#98a0a6" width="14.6" height="14.6"><use href="#iPin"/></svg>
<svg class="abs" style="left:44.80px;top:567.40px" width="19.4" height="19.4"><use href="#iPicS"/></svg>
<div class="t" style="left:69.50px;top:569.35px;font-size:16px;color:#1b1b1b;letter-spacing:-0.685px;">Pictures</div>
<svg class="abs" style="left:254.80px;top:569.00px;color:#98a0a6" width="14.6" height="14.6"><use href="#iPin"/></svg>

 </div>
 <div id="track"></div><div id="thumb"></div><div id="cline"></div>
<svg class="abs" style="left:340.40px;top:202.80px;color:#2b2b2b" width="16.6" height="9.4"><use href="#iChevD"/></svg>
<div class="t" style="left:377.80px;top:200.63px;font-size:14.6px;color:#1b1b1b;font-weight:bold;letter-spacing:-0.350px;">Quick access</div>
<svg class="abs" style="left:340.40px;top:496.80px;color:#2b2b2b" width="16.6" height="9.4"><use href="#iChevD"/></svg>
<div class="t" style="left:377.80px;top:494.63px;font-size:14.6px;color:#1b1b1b;font-weight:bold;letter-spacing:-0.246px;">Favorites</div>
<svg class="abs" style="left:340.40px;top:581.00px;color:#2b2b2b" width="16.6" height="9.4"><use href="#iChevD"/></svg>
<div class="t" style="left:377.80px;top:578.83px;font-size:14.6px;color:#1b1b1b;font-weight:bold;letter-spacing:-0.237px;">Recent</div>
<div class="t" style="left:377.80px;top:527.56px;font-size:15.4px;color:#909090;letter-spacing:0.138px;">After you’ve favorited some files, we’ll show them here.</div>
<div class="t" style="left:377.80px;top:611.76px;font-size:15.4px;color:#909090;letter-spacing:0.115px;">After you’ve opened some files, we’ll show the most recent ones here.</div>
<svg class="abs" style="left:424.10px;top:252.10px" width="55.6" height="43.8" viewBox="0 0 56 44"><use href="#fTab" style="color:#0a6fce"/><use href="#fBody" fill="url(#gDeskL)"/><rect x="4.4" y="13.6" width="3.4" height="3.400" fill="#fff"/><rect x="4.4" y="20.200" width="3.400" height="3.400" fill="#fff"/><path d="M0 39.600H56V41Q56 44 53 44H3Q0 44 0 41Z" fill="#0a4a82"/><rect x="44.200" y="40.600" width="1.800" height="1.800" fill="#7fb0d8"/><rect x="49.400" y="40.600" width="1.800" height="1.800" fill="#7fb0d8"/></svg>
<svg class="abs" style="left:380.60px;top:265.00px" width="20.6" height="20.6"><use href="#iCheckO"/></svg>
<div class="t" style="left:499.80px;top:248.19px;font-size:15.6px;color:#1b1b1b;letter-spacing:-0.038px;">Desktop</div>
<div class="t" style="left:499.80px;top:268.99px;font-size:15.6px;color:#6e6e6e;letter-spacing:-0.152px;">Amanda - Personal</div>
<svg class="abs" style="left:503.80px;top:290.60px;color:#9a9a9a" width="14.2" height="14.2"><use href="#iPin"/></svg>
<svg class="abs" style="left:424.10px;top:331.10px" width="55.6" height="43.8" viewBox="0 0 56 44"><use href="#fTab" style="color:#6b8795"/><use href="#fBody" fill="url(#gDocL)"/><g fill="#fff"><rect x="15" y="13.800" width="12.600" height="2.100"/><rect x="15" y="20.300" width="12.600" height="2.100"/><rect x="15" y="26.800" width="25.800" height="2.200"/><rect x="15" y="33.400" width="25.800" height="2.200"/><rect x="32.200" y="13.800" width="8.600" height="8.600"/></g><path d="M0 42V41Q0 43 3 43.200H53Q56 43 56 41V42Q56 44 53 44H3Q0 44 0 42Z" fill="#5d7890" opacity=".6"/></svg>
<svg class="abs" style="left:380.60px;top:346.60px" width="21.6" height="15.8"><use href="#iCloudO"/></svg>
<div class="t" style="left:499.80px;top:327.19px;font-size:15.6px;color:#1b1b1b;letter-spacing:-0.037px;">Documents</div>
<div class="t" style="left:499.80px;top:347.99px;font-size:15.6px;color:#6e6e6e;letter-spacing:-0.152px;">Amanda - Personal</div>
<svg class="abs" style="left:503.80px;top:369.60px;color:#9a9a9a" width="14.2" height="14.2"><use href="#iPin"/></svg>
<svg class="abs" style="left:424.10px;top:410.10px" width="55.6" height="43.8" viewBox="0 0 56 44"><use href="#fTab" style="color:#cf6812"/><use href="#fBody" fill="url(#gMusL)"/><g fill="#fff"><circle cx="25.800" cy="32.500" r="4.800"/><rect x="29.300" y="12" width="1.500" height="21"/><path d="M29.300 10.800L38.800 14.200V20.600L29.300 18Z"/></g></svg>
<svg class="abs" style="left:380.60px;top:425.60px" width="21.6" height="15.8"><use href="#iCloudO"/></svg>
<div class="t" style="left:499.80px;top:406.19px;font-size:15.6px;color:#1b1b1b;letter-spacing:-0.134px;">Music</div>
<div class="t" style="left:499.80px;top:426.99px;font-size:15.6px;color:#6e6e6e;letter-spacing:-0.152px;">Amanda - Personal</div>
<svg class="abs" style="left:503.80px;top:448.60px;color:#9a9a9a" width="14.2" height="14.2"><use href="#iPin"/></svg>
<svg class="abs" style="left:798.10px;top:252.10px" width="55.6" height="43.8" viewBox="0 0 56 44"><use href="#fTab" style="color:#0b8058"/><use href="#fBody" fill="url(#gDl)"/><path d="M27.800 12.500V32M20.400 25.200L27.800 32.600L35.600 25.200" fill="none" stroke="#fff" stroke-width="2.100" stroke-linecap="round" stroke-linejoin="round"/><rect x="18.600" y="35.900" width="18.600" height="2.600" fill="#fff"/></svg>
<div class="t" style="left:873.80px;top:248.19px;font-size:15.6px;color:#1b1b1b;letter-spacing:0.015px;">Downloads</div>
<div class="t" style="left:873.80px;top:268.99px;font-size:15.6px;color:#6e6e6e;letter-spacing:-0.065px;">Stored locally</div>
<svg class="abs" style="left:877.80px;top:290.60px;color:#9a9a9a" width="14.2" height="14.2"><use href="#iPin"/></svg>
<svg class="abs" style="left:798.10px;top:331.10px" width="55.6" height="43.8" viewBox="0 0 56 44"><use href="#fTab" style="color:#0a6acb"/><use href="#fBody" fill="url(#gPicL)"/><path d="M3.600 43L26.800 21.200Q28.200 19.900 29.600 21.200L52.200 43Z" fill="url(#gMtn)"/><circle cx="36.300" cy="12.900" r="3.300" fill="#fff"/></svg>
<svg class="abs" style="left:754.60px;top:346.60px" width="21.6" height="15.8"><use href="#iCloudO"/></svg>
<div class="t" style="left:873.80px;top:327.19px;font-size:15.6px;color:#1b1b1b;letter-spacing:-0.350px;">Pictures</div>
<div class="t" style="left:873.80px;top:347.99px;font-size:15.6px;color:#6e6e6e;letter-spacing:-0.152px;">Amanda - Personal</div>
<svg class="abs" style="left:877.80px;top:369.60px;color:#9a9a9a" width="14.2" height="14.2"><use href="#iPin"/></svg>
<svg class="abs" style="left:798.10px;top:410.10px" width="55.6" height="43.8" viewBox="0 0 56 44"><use href="#fTab" style="color:#8559c0"/><use href="#fBody" fill="url(#gVid)"/><g fill="url(#gPerf)"><rect x="4" y="13.800" width="6.700" height="6"/><rect x="4" y="23.100" width="6.700" height="5.800"/><rect x="4" y="32.100" width="6.700" height="6.500"/><rect x="44.800" y="13.800" width="6.900" height="6"/><rect x="44.800" y="23.100" width="6.900" height="5.800"/><rect x="44.800" y="32.100" width="6.900" height="6.500"/></g><path d="M21.100 16.400Q21.100 15 22.300 15.800L36.400 24.600Q37.400 25.250 36.400 25.900L22.300 34.600Q21.100 35.400 21.100 34Z" fill="url(#gPlay)"/></svg>
<svg class="abs" style="left:754.60px;top:425.60px" width="21.6" height="15.8"><use href="#iCloudO"/></svg>
<div class="t" style="left:873.80px;top:406.19px;font-size:15.6px;color:#1b1b1b;letter-spacing:-0.163px;">Videos</div>
<div class="t" style="left:873.80px;top:426.99px;font-size:15.6px;color:#6e6e6e;letter-spacing:-0.152px;">Amanda - Personal</div>
<svg class="abs" style="left:877.80px;top:448.60px;color:#9a9a9a" width="14.2" height="14.2"><use href="#iPin"/></svg>

 <div id="status">
<div class="t" style="left:18.80px;top:8.66px;font-size:15.4px;color:#33475c;letter-spacing:0.094px;">6 items</div>
<div class="abs" style="left:84px;top:8px;width:1px;height:15px;background:#efefef"></div>

 </div>
</div>
<div id="taskbar">
<svg class="abs" style="left:18.00px;top:11.50px" width="26.4" height="26.4" viewBox="0 0 26 26"><defs><linearGradient id="gSun" x1="0.1" y1="0.1" x2="0.9" y2="0.9"><stop offset="0" stop-color="#ffe566"/><stop offset=".55" stop-color="#ffc02e"/><stop offset="1" stop-color="#ff8f1a"/></linearGradient></defs><circle cx="13" cy="13" r="13" fill="url(#gSun)"/></svg>
<div class="t" style="left:52.00px;top:11.44px;font-size:12px;color:#1b1b1b;letter-spacing:-0.659px;">78°F</div>
<div class="t" style="left:52.00px;top:26.44px;font-size:12px;color:#5c5c5c;letter-spacing:-0.131px;">Sunny</div>
<svg class="abs" style="left:465.50px;top:11.70px" width="23.4" height="23.4" viewBox="0 0 23.4 23.4"><defs><linearGradient id="gWin" x1="0" y1="0" x2="1" y2="1"><stop offset="0" stop-color="#55c8fb"/><stop offset="1" stop-color="#0a7ad8"/></linearGradient></defs><path d="M0 0H11.100V11.100H0ZM12.300 0H23.400V11.100H12.300ZM0 12.300H11.100V23.400H0ZM12.300 12.300H23.400V23.400H12.300Z" fill="url(#gWin)"/></svg>
<div class="abs" style="left:499.600px;top:7.400px;width:219px;height:31.600px;border-radius:15.800px;background:linear-gradient(180deg,#f8fafe,#f2f5fb);border:1px solid #ccd2de"></div>
<svg class="abs" style="left:516.30px;top:14.90px" width="17" height="17" viewBox="0 0 17 17"><circle cx="7.300" cy="7" r="6.200" fill="none" stroke="#262626" stroke-width="1.900"/><path d="M11.900 11.500L16 15.800" stroke="#262626" stroke-width="2.100" stroke-linecap="round"/></svg>
<div class="t" style="left:538.00px;top:16.57px;font-size:13.5px;color:#474747;-webkit-text-stroke:.45px #474747;letter-spacing:-0.315px;">Search</div>
<div class="abs" style="left:674.500px;top:11.200px;width:40.300px;height:23.600px;border-radius:11.800px;background:#e4e5e9"></div>
<svg class="abs" style="left:681.80px;top:14.00px" width="27.4" height="17.4" viewBox="0 0 27.400 17.400"><defs><linearGradient id="gLo" x1="0" y1="0" x2="0" y2="1"><stop offset="0" stop-color="#fbc8e0"/><stop offset="1" stop-color="#f170ac"/></linearGradient><linearGradient id="gLo2" x1="0" y1="0" x2="0" y2="1"><stop offset="0" stop-color="#fbbcd8"/><stop offset="1" stop-color="#f58abc"/></linearGradient><linearGradient id="gLf" x1="0" y1="0" x2="1" y2="0"><stop offset="0" stop-color="#6aa82e"/><stop offset=".5" stop-color="#3d8f24"/><stop offset="1" stop-color="#2e7d1e"/></linearGradient></defs><ellipse cx="13.700" cy="15.600" rx="13.700" ry="1.700" fill="url(#gLf)"/><g fill="url(#gLo2)"><path d="M13.600 0.200Q16.500 4 13.600 9Q10.700 4 13.600 0.200Z"/><path d="M7.600 1.900Q11.500 4 12 10Q7.500 8 7.600 1.900Z"/><path d="M19.600 1.900Q15.700 4 15.200 10Q19.700 8 19.600 1.900Z"/><path d="M3.400 5.200Q8.500 5.500 11 12Q4.500 11.500 3.400 5.200Z"/><path d="M23.800 5.200Q18.700 5.500 16.200 12Q22.700 11.500 23.800 5.200Z"/></g><path d="M9.800 8.500L10.500 4.500L11.800 6L12.600 3.200L13.700 5.600L14.800 3.200L15.600 6L16.900 4.500L17.600 8.500Z" fill="#ffc41e"/><g fill="url(#gLo)"><path d="M1.400 8.700Q8 8.500 10.600 15.600Q3 16.500 1.400 8.700Z"/><path d="M26 8.700Q19.400 8.500 16.800 15.600Q24.400 16.500 26 8.700Z"/><path d="M13.700 7.800Q17.600 9.500 17.400 15.800Q13.700 16.600 10 15.800Q9.800 9.500 13.700 7.800Z"/></g></svg>
<svg class="abs" style="left:729.60px;top:12.00px" width="24" height="22" viewBox="0 0 24 22"><defs><linearGradient id="gTvW" x1="0" y1="0" x2="1" y2="1"><stop offset="0" stop-color="#ffffff"/><stop offset="1" stop-color="#dfe2e8"/></linearGradient><linearGradient id="gTvD" x1="0" y1="0" x2="0" y2="1"><stop offset="0" stop-color="#444"/><stop offset="1" stop-color="#1c1c1c"/></linearGradient></defs><rect x="0" y="6" width="17.700" height="16" rx="1.200" fill="url(#gTvD)"/><rect x="6" y="0" width="18" height="15.600" rx="1.200" fill="url(#gTvW)"/><rect x="6" y="6" width="11.700" height="9.600" fill="#a9abb0" opacity=".92"/></svg>
<svg class="abs" style="left:773.30px;top:11.70px" width="24.4" height="22.4" viewBox="0 0 24.400 22.400"><defs><linearGradient id="gCpL" x1="0" y1="0" x2="0" y2="1"><stop offset="0" stop-color="#1aa6fa"/><stop offset=".3" stop-color="#1c98d0"/><stop offset=".52" stop-color="#4cb070"/><stop offset=".72" stop-color="#a4bc34"/><stop offset=".95" stop-color="#f6c800"/></linearGradient><linearGradient id="gCpR" x1="0" y1="0" x2="0" y2="1"><stop offset="0" stop-color="#b052ea"/><stop offset=".5" stop-color="#ee5292"/><stop offset="1" stop-color="#ffa850"/></linearGradient><linearGradient id="gCpB" x1="0" y1="0" x2="0" y2="1"><stop offset="0" stop-color="#0a34c8"/><stop offset="1" stop-color="#1f84ee"/></linearGradient><linearGradient id="gCpO" x1="0" y1="0" x2="1" y2="1"><stop offset="0" stop-color="#ff8a36"/><stop offset="1" stop-color="#e4322a"/></linearGradient></defs><path d="M11.900 6.500H15.700L12.600 15.900H9.200Z" fill="#f0f2f9"/><path d="M13.600 0.300H15Q17 0.300 17.700 2.200L19.400 6.400H11.900Z" fill="url(#gCpB)"/><path d="M5.300 16H12.600L11 22.100H10Q8 22.100 7.200 20.300Z" fill="url(#gCpO)"/><path d="M6.500 0.300H13.600L9.300 15.800H3Q0.200 15.800 0.900 12.800L3.200 3Q3.900 0.300 6.500 0.300Z" fill="url(#gCpL)"/><path d="M15.600 6.600H21.500Q24.600 6.600 23.900 9.600L21.400 19.400Q20.700 22.100 18 22.100H11Z" fill="url(#gCpR)"/></svg>
<div class="abs" style="left:810.300px;top:3.800px;width:38.200px;height:38.400px;border-radius:4.500px;background:#f2f5fb;box-shadow:0 0 0 .6px #e8ebf2"></div>
<svg class="abs" style="left:817.40px;top:12.70px" width="24.4" height="21.4" viewBox="0 0 64 56"><use href="#fExplorer"/></svg>
<div class="abs" style="left:821.300px;top:38.800px;width:16.200px;height:3.100px;border-radius:1.550px;background:#0a5fc2"></div>
<svg class="abs" style="left:861.30px;top:10.80px" width="24.4" height="24.4" viewBox="0 0 24.400 24.400"><defs><linearGradient id="gEd1" x1="0" y1="0" x2="0" y2="1"><stop offset="0" stop-color="#1f9fe6"/><stop offset="1" stop-color="#0a62c6"/></linearGradient><linearGradient id="gEd2" x1="0" y1="0.200" x2="1" y2="0.500"><stop offset="0" stop-color="#3cc8f6"/><stop offset=".5" stop-color="#2cc2c4"/><stop offset=".95" stop-color="#5ee862"/></linearGradient><linearGradient id="gEd3" x1="0" y1="0" x2="1" y2="1"><stop offset="0" stop-color="#1866b8"/><stop offset="1" stop-color="#0c4690"/></linearGradient></defs><circle cx="12.200" cy="12.200" r="12.200" fill="url(#gEd1)"/><path d="M9 12.200Q9 9.400 12 9.400Q15.200 9.400 15.300 12.200Q15.300 14 14 14.700Q17 16.500 20.800 15.800L22 12L25 11V19L22.600 18.100Q17.400 19.400 13 17.500Q9 15.500 9 12.200Z" fill="#dee4f1"/><path d="M0.300 8Q3 0 12.500 0Q20 0 23.400 6Q25.600 11.500 22.500 14.600Q20 16.800 16.500 15.600Q14.500 15 14 14.700Q15.400 13.500 15.400 12.100Q15.300 9 12 7.200Q7 4.500 0.300 8Z" fill="url(#gEd2)"/><path d="M7.100 12Q6.200 17 8.300 21.800Q10 24 12.800 24.300Q16 24.300 18.500 22.700Q21.500 20.800 22.600 18.100Q17.500 20 13 17.500Q9.200 15.200 9.100 12.200Q9 11 9.400 10Q7.600 10.500 7.100 12Z" fill="url(#gEd3)"/></svg>
<svg class="abs" style="left:905.30px;top:10.60px" width="23.5" height="23.6" viewBox="0 0 23.500 23.600"><defs><linearGradient id="gSt" x1="0" y1="0" x2="0" y2="1"><stop offset="0" stop-color="#1a62ae"/><stop offset="1" stop-color="#1a457c"/></linearGradient></defs><path d="M6 6.500V3.600Q6 0.900 8.700 0.900H14.800Q17.500 0.900 17.500 3.600V6.500" fill="none" stroke="#38b6f0" stroke-width="1.700"/><path d="M0 4.400H23.500V19.600Q23.500 23.600 19.500 23.600H4Q0 23.600 0 19.600Z" fill="url(#gSt)"/><rect x="6.900" y="9.300" width="4.100" height="4" fill="#f25022"/><rect x="12.100" y="9.300" width="4.300" height="4" fill="#7fba00"/><rect x="6.900" y="14.300" width="4.100" height="4" fill="#00a4ef"/><rect x="12.100" y="14.300" width="4.300" height="4" fill="#ffb900"/></svg>
<svg class="abs" style="left:947.90px;top:7.90px" width="27.1" height="28" viewBox="0 0 27.300 28.100"><rect x="0" y="0" width="27.300" height="28.100" rx="2.800" fill="#107c10"/><g fill="#fff"><path d="M8 4.300A11.600 11.600 0 0 1 19.300 4.300Q16 4.700 13.650 6.300Q11.300 4.700 8 4.300Z"/><path d="M5.800 5.600Q8.500 7 10.200 9.200Q5.500 14.500 4.200 20.800A11.600 11.600 0 0 1 5.800 5.600Z"/><path d="M21.500 5.600Q18.800 7 17.100 9.200Q21.800 14.500 23.100 20.800A11.600 11.600 0 0 0 21.500 5.600Z"/><path d="M13.650 11.900Q8 17 5.900 21.900A11.600 11.600 0 0 0 21.400 21.900Q19.300 17 13.650 11.900Z"/></g></svg>
<svg class="abs" style="left:1198.60px;top:20.60px" width="13" height="8" viewBox="0 0 13 8"><path d="M1 6.800L6.500 1.300L12 6.800" fill="none" stroke="#1f1f1f" stroke-width="1.600" stroke-linecap="round" stroke-linejoin="round"/></svg>
<svg class="abs" style="left:1227.20px;top:16.70px" width="21.8" height="14.2" viewBox="0 0 22.400 15"><path d="M5.400 14.200Q0.800 14.200 0.800 10Q0.800 6.400 4.700 5.700Q6.600 0.800 11.400 0.800Q15.400 0.800 17 5Q21.600 5.400 21.600 9.700Q21.600 14.200 17 14.200Z" fill="#9c9c9c"/><path d="M4.700 5.700Q6.600 0.800 11.400 0.800Q15.400 0.800 17 5L11.500 8.200Z" fill="#6c6c6c"/><path d="M1.200 12L11.500 7.600L21 11.800Q20 14.200 17 14.200H5.400Q2.200 14.200 1.200 12Z" fill="#d4d4d4"/><path d="M11.500 7.600L17 5Q21.600 5.400 21.600 9.700Q21.600 11 21 11.800Z" fill="#b4b4b4"/><path d="M5.400 14.200Q0.800 14.200 0.800 10Q0.800 6.400 4.700 5.700Q6.600 0.800 11.400 0.800Q15.400 0.800 17 5Q21.600 5.400 21.600 9.700Q21.600 14.200 17 14.200Z" fill="none" stroke="#232323" stroke-width="1.600" stroke-linejoin="round"/></svg>
<svg class="abs" style="left:1261.80px;top:17.60px" width="17" height="12" viewBox="0 0 17 12"><path d="M1 4.400Q8.500 -2 16 4.400M3.400 6.900Q8.500 2.600 13.600 6.900M5.900 9.200Q8.500 7 11.100 9.200" fill="none" stroke="#1f1f1f" stroke-width="1.300" stroke-linecap="round"/><circle cx="8.500" cy="10.900" r="1.100" fill="#1f1f1f"/></svg>
<svg class="abs" style="left:1285.40px;top:17.20px" width="17.4" height="14" viewBox="0 0 17.400 14"><path d="M0.700 4.800H3.400L7.200 1.200V12.800L3.400 9.200H0.700Z" fill="none" stroke="#1f1f1f" stroke-width="1.200" stroke-linejoin="round"/><path d="M9.800 4.600Q11.400 7 9.800 9.400M12 2.800Q15 7 12 11.200M14.300 1.200Q18.200 7 14.300 12.800" fill="none" stroke="#1f1f1f" stroke-width="1.200" stroke-linecap="round"/></svg>
<svg class="abs" style="left:1310.20px;top:18.80px" width="16.6" height="10.2" viewBox="0 0 16.600 10.200"><rect x="0.750" y="0.750" width="13.500" height="8.700" rx="2.300" fill="none" stroke="#1f1f1f" stroke-width="1.400"/><rect x="2.600" y="2.600" width="9.800" height="5" rx="1" fill="#1f1f1f"/><path d="M15.500 3.600V6.600" stroke="#1f1f1f" stroke-width="1.700" stroke-linecap="round"/></svg>
<div class="t" style="right:43.60px;top:11.84px;font-size:12px;color:#1b1b1b;">11:11 AM</div>
<div class="t" style="right:43.60px;top:25.94px;font-size:12px;color:#1b1b1b;">1/11/2025</div>
<svg class="abs" style="left:1405.80px;top:16.30px" width="13.8" height="15" viewBox="0 0 13.800 15"><path d="M1.600 11.200Q2.600 9.600 2.600 6.400Q2.600 1 6.900 1Q11.200 1 11.200 6.400Q11.200 9.600 12.200 11.200Z" fill="none" stroke="#1f1f1f" stroke-width="1.300" stroke-linejoin="round"/><path d="M5.200 12.600Q6.900 14.800 8.600 12.600" fill="none" stroke="#1f1f1f" stroke-width="1.300" stroke-linecap="round"/></svg>

</div>
</div>
<div class="abs" style="left:825.800px;top:960px;width:4.700px;height:30px;background:#0f6dcc"></div>
<div class="abs" style="left:764px;top:988px;width:128px;height:128px;border-radius:50%;background:#f5f5f5;border:5px solid #0f6dcc;box-shadow:0 0 0 1px rgba(255,255,255,.10)"></div>
<svg class="abs" style="left:796px;top:1025px" width="64" height="56" viewBox="0 0 64 56"><use href="#fExplorer"/></svg>

</body></html>
